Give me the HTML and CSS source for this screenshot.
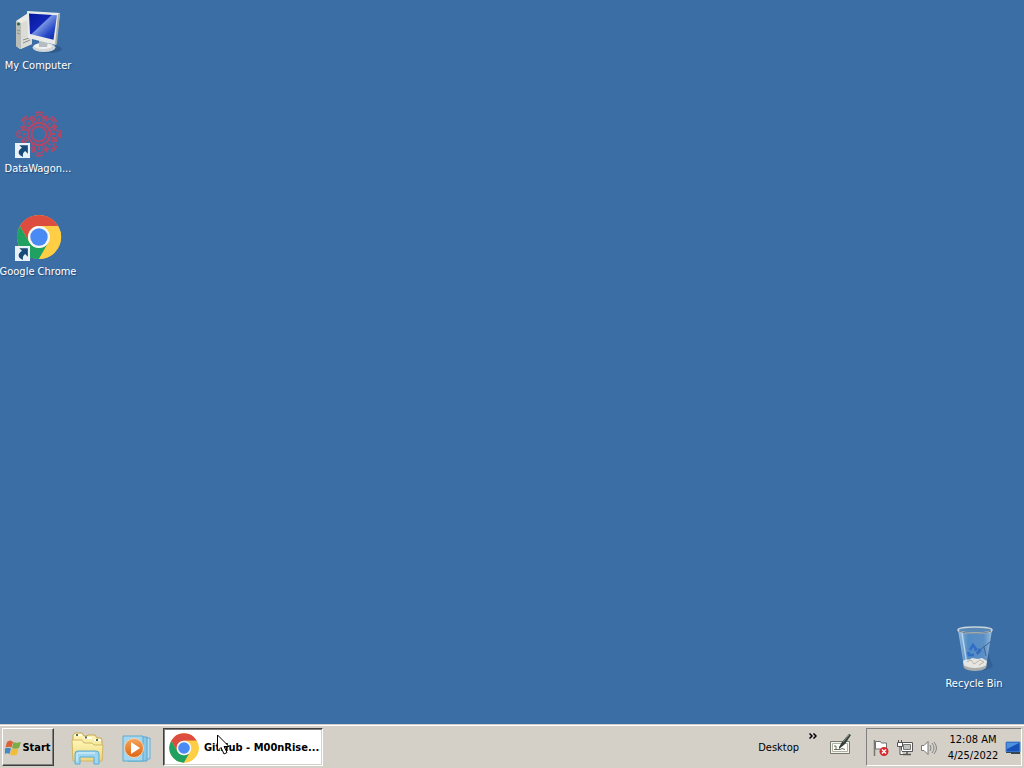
FILE: index.html
```html
<!DOCTYPE html>
<html lang="en">
<head>
<meta charset="utf-8">
<meta name="viewport" content="width=device-width, initial-scale=1">
<title>Desktop</title>
<link rel="stylesheet" href="styles.css">
</head>
<body>
<svg class="defs" width="0" height="0" aria-hidden="true">
  <defs>
    <symbol id="chrome" viewBox="0 0 48 48">
      <circle cx="24" cy="24" r="22" fill="#fc4"/>
      <path d="M4.9 13A22 22 0 0 1 43.1 13H24A11 11 0 0 0 14.5 29.5Z" fill="#dd4d3f"/>
      <path d="M4.9 13A22 22 0 0 0 24 46L33.5 29.5A11 11 0 0 1 14.5 29.5Z" fill="#1fa261"/>
      <path d="M43.1 13A22 22 0 0 1 24 46L33.5 29.5A11 11 0 0 0 24 13Z" fill="#fecf45"/>
      <circle cx="24" cy="24" r="11" fill="#f5f7fb"/>
      <circle cx="24" cy="24" r="8.7" fill="#4a8af4"/>
    </symbol>
    <symbol id="shortcut" viewBox="0 0 14 14">
      <path d="M0 0h14v14H0z" fill="#e9f1f8"/>
      <path d="M4 2h8v8L9.500 7.500C7.500 9 7 10.500 7.500 13C2.500 11 2 7.500 6.500 4.500Z" fill="#174a78"/>
    </symbol>
    <linearGradient id="screen" x1="0" y1="0" x2="1" y2="1">
      <stop offset="0" stop-color="#0716a0"/><stop offset=".42" stop-color="#1128b5"/><stop offset=".45" stop-color="#7793e2"/><stop offset=".72" stop-color="#2748c6"/><stop offset="1" stop-color="#0720a8"/>
    </linearGradient>
    <linearGradient id="folder" x1="0" y1="0" x2="0" y2="1">
      <stop offset="0" stop-color="#fff6b5"/><stop offset="1" stop-color="#ecd680"/>
    </linearGradient>
    <linearGradient id="glass" x1="0" x2="1">
      <stop offset="0" stop-color="#b6d5ee" stop-opacity=".75"/><stop offset=".3" stop-color="#5b98d2" stop-opacity=".7"/><stop offset=".75" stop-color="#6ea5d8" stop-opacity=".6"/><stop offset="1" stop-color="#b6d5ee" stop-opacity=".8"/>
    </linearGradient>
    <linearGradient id="orange" x1="0" y1="0" x2="0" y2="1">
      <stop offset="0" stop-color="#f5a45c"/><stop offset="1" stop-color="#de6412"/>
    </linearGradient>
    <g id="petal" fill="none" stroke="#b04868" stroke-width="1.800">
      <circle cx="24" cy="9" r="4.500" stroke-dasharray="3 1"/>
      <path d="M20 3l4-1 4 1M16 6l3 3M31 6l-3 3M19 15c2-3 8-3 10 0M24 8v3M20 18c2-2 6-2 8 0"/>
    </g>
  </defs>
</svg>

<main class="desktop">
  <nav class="shortcuts" aria-label="Desktop icons">
    <button class="item" type="button">
      <svg class="item-icon" viewBox="-1 0 48 48" aria-hidden="true">
        <path d="M1 13l12-8 4 2v29l-12 5-4-3z" fill="#ecebe4"/>
        <path d="M1 13l5 2v26l-5-3z" fill="#b9bcb7"/>
        <path d="M6 15l11-5v26L6 41z" fill="#dbdcd6"/>
        <circle cx="3.500" cy="16" r="1.500" fill="#1e6a43"/>
        <path d="M2 22l3 1m-3 2l3 1m3 6l6-2m-6 5l7-3" stroke="#8a8f8e"/>
        <ellipse cx="34" cy="41" rx="13" ry="4" fill="#244b77" opacity=".5"/>
        <ellipse cx="29" cy="39.500" rx="11.500" ry="4.500" fill="#d2d6d9"/>
        <ellipse cx="28" cy="38" rx="9" ry="3" fill="#f0f1ef"/>
        <path d="M24 31l9 3-1 5h-8z" fill="#b5bcc2"/>
        <path d="M12 3l33 2-4 32-28-7z" fill="#e9ebe9"/>
        <path d="M45 5l-3 31-2 1 3-31z" fill="#a9aba8"/>
        <path d="M14 5.500l28 1.800-3.500 24.500L15 26z" fill="url(#screen)"/>
      </svg>
      <span class="item-label">My Computer</span>
    </button>
    <button class="item" type="button">
      <svg class="item-icon" viewBox="-1 1 48 48" aria-hidden="true">
        <use href="#petal"/>
        <use href="#petal" transform="rotate(45 24 24)"/>
        <use href="#petal" transform="rotate(90 24 24)"/>
        <use href="#petal" transform="rotate(135 24 24)"/>
        <use href="#petal" transform="rotate(180 24 24)"/>
        <use href="#petal" transform="rotate(225 24 24)"/>
        <use href="#petal" transform="rotate(270 24 24)"/>
        <use href="#petal" transform="rotate(315 24 24)"/>
        <use href="#shortcut" x="0" y="33" width="15" height="15"/>
      </svg>
      <span class="item-label">DataWagon...</span>
    </button>
    <button class="item" type="button">
      <svg class="item-icon" viewBox="-1 1 48 48" aria-hidden="true">
        <use href="#chrome" width="48" height="48"/>
        <use href="#shortcut" x="0" y="33" width="15" height="15"/>
      </svg>
      <span class="item-label">Google Chrome</span>
    </button>
  </nav>
  <button class="item recycle" type="button">
    <svg class="item-icon" viewBox="-1 1 48 48" aria-hidden="true">
      <path d="M36 25l6 17-10 4z" fill="#244b77" opacity=".35"/>
      <path d="M7 5h34l-6 37c-4 4-18 4-22 0z" fill="url(#glass)"/>
      <path d="M12 36c3-3 6 0 9-3l6 1 4-1 5 3-1 6c-5 4-18 4-22 0z" fill="#e7e5df"/>
      <path d="M15 37l5-2 3 4 6-4 4 2-5 3" fill="none" stroke="#b9b5aa"/>
      <path d="M12.500 40c5 4 18 4 23 0l-.5 3c-4 4-18 4-22 0z" fill="#a9adac"/>
      <path d="M19 25l3-5 3 4-1 2m-1 4h-5l-1-3m9 2l3-3-2-2" fill="none" stroke="#2460c9" stroke-width="2.500" opacity=".7"/>
      <path d="M25 28L39 17M33 22l2 9" stroke="#3c6495"/>
      <path d="M11 8l5 32" stroke="#d8eaf8" stroke-width="1.500" opacity=".7"/>
      <ellipse cx="24" cy="5" rx="17" ry="3" fill="#5788b6" stroke="#cad4d9" stroke-width="1.500"/>
      <path d="M8 6c6 3 26 3 32 0" fill="none" stroke="#707c82"/>
    </svg>
    <span class="item-label">Recycle Bin</span>
  </button>
</main>

<footer class="taskbar">
  <button class="start" type="button">
    <svg class="flag" viewBox="0 0 16 16" aria-hidden="true">
      <path d="M2 2c2-2 4-2 6 0L6.500 7.500c-2-1-4-1-6 0z" fill="#dd6039"/>
      <path d="M8.500 2c2 1 4 1 7.500 0L14 8c-2 1-5 1-7 0z" fill="#7cac45"/>
      <path d="M0 8.500c2-1 4-1 6 0L4.500 14c-1.500-1-3-1-4.500 0z" fill="#438ac5"/>
      <path d="M6.500 8.500c2 1 5 1 7 0l-1.500 6c-2 1.500-5 1-7 0z" fill="#efbc3c"/>
    </svg>
    <span>Start</span>
  </button>
  <div class="quick">
    <button class="pin" type="button" aria-label="File Explorer">
      <svg class="pin-icon" viewBox="0 0 34 34" aria-hidden="true">
        <path d="M3 28V4l2-2h7l2 3h3l1-1h7l2 3h4l1 2v20z" fill="url(#folder)" stroke="#c6a854"/>
        <path d="M5 4h7M14 7h8M24 9h7" stroke="#fffdf0" stroke-width="2"/>
        <path d="M6 4h2M15 6.500h2M26 9h2" stroke="#566d51" stroke-width="2"/>
        <path d="M2 9h10l2 3h8l2 2h9l-1 16H3z" fill="url(#folder)" stroke="#d2b866"/>
        <path d="M5 33V23q0-3 3-3h18q3 0 3 3v10h-5v-7H10v7z" fill="#9ed5ef" stroke="#5caad2"/>
        <path d="M7 30v-7q0-1 2-1h16" fill="none" stroke="#e2f6fd"/>
      </svg>
    </button>
    <button class="pin" type="button" aria-label="Media Player">
      <svg class="pin-icon" viewBox="0 0 34 34" aria-hidden="true">
        <path d="M11 7h19v21H11z" fill="#b5def0" stroke="#67aed2"/>
        <path d="M8 6h19v24H8z" fill="#8dc9e7" stroke="#5aa3cc"/>
        <path d="M3 5h20v25H3z" fill="#a4d7ee" stroke="#5caad2"/>
        <circle cx="14" cy="17" r="9.500" fill="url(#orange)" stroke="#f6d4b1"/>
        <path d="M11 11l9 6-9 6z" fill="#fff"/>
      </svg>
    </button>
  </div>
  <button class="task" type="button">
    <svg class="task-icon" viewBox="0 0 48 48" aria-hidden="true"><use href="#chrome" width="48" height="48"/></svg>
    <span class="task-label">GitHub - M00nRise...</span>
  </button>
  <div class="toolbar">
    <span>Desktop</span>
    <button class="more" type="button" aria-label="Show more">
      <svg class="more-icon" viewBox="0 0 8 6" aria-hidden="true"><path d="M.500.500L3 3 .500 5.500M4.500.500L7 3 4.500 5.500" fill="none" stroke="#000" stroke-width="1.500"/></svg>
    </button>
  </div>
  <button class="pen" type="button" aria-label="Input panel">
    <svg class="pen-icon" viewBox="0 0 24 24" aria-hidden="true">
      <path d="M2.500 9.500h19v12h-19z" fill="#f5f4eb" stroke="#777970"/>
      <path d="M4.500 11.500h15v8h-15z" fill="#fffff8" stroke="#b0afa4"/>
      <path d="M6 14h2v3M6 17.500h6l2-1 3 1" fill="none" stroke="#666c64"/>
      <path d="M11 15l3-5 7-8 2 1-6 9-6 5z" fill="#343e3a"/>
      <path d="M15 10l6-7" stroke="#87938c"/>
    </svg>
  </button>
  <div class="tray">
    <button class="tray-button" type="button" aria-label="Action Center">
      <svg class="tray-icon" viewBox="0 0 16 16" aria-hidden="true">
        <path d="M1.500 0v16" stroke="#777" stroke-width="1.500"/>
        <path d="M2.500 1.500h5l1 1.500h5v7H8L7 9H2.500z" fill="#fff" stroke="#707070"/>
        <circle cx="11" cy="11.500" r="4.500" fill="#d52b32"/>
        <path d="M9 9.500l4 4m0-4l-4 4" stroke="#fff" stroke-width="1.500"/>
      </svg>
    </button>
    <button class="tray-button" type="button" aria-label="Network">
      <svg class="tray-icon" viewBox="0 0 16 16" aria-hidden="true">
        <path d="M4.500 2.500h11v9h-11z" fill="#fff" stroke="#565656"/>
        <path d="M6.500 4.500h7v5h-7z" fill="#c2c1bd" stroke="#777"/>
        <path d="M10 12v2M6 14.500h8" stroke="#555" stroke-width="1.500"/>
        <path d="M.500 2.500h5v4h-5zM1.500 2.500V0m3 2.500V0M3 7v7.500h3" fill="#fff" stroke="#555"/>
      </svg>
    </button>
    <button class="tray-button" type="button" aria-label="Volume">
      <svg class="tray-icon" viewBox="0 0 16 16" aria-hidden="true">
        <path d="M.500 5.500H3l4-4v13l-4-4H.500z" fill="#fff" stroke="#777"/>
        <path d="M9 5q2 3 0 6M11 3q4 5 0 10M13 2q5 6 0 12" fill="none" stroke="#858585"/>
      </svg>
    </button>
    <time class="clock" datetime="2022-04-25T00:08"><span>12:08 AM</span><span>4/25/2022</span></time>
    <button class="tray-button" type="button" aria-label="Show desktop">
      <svg class="tray-icon" viewBox="0 0 16 16" aria-hidden="true">
        <path d="M1 2h14v10H1z" fill="#1750b8" stroke="#568fcf"/>
        <path d="M2 3h12L2 9z" fill="#4d92de"/>
        <path d="M1 12h14v2H6v-1H1z" fill="#344651"/>
      </svg>
    </button>
  </div>
</footer>
<svg class="cursor" viewBox="0 0 13 21" aria-hidden="true"><path d="M.500 1v16l3.500-3.500 3 6.500 3-1.500-3-6h5z" fill="#fff" stroke="#000"/></svg>
</body>
</html>
```
FILE: styles.css
```css
* {
  box-sizing: border-box;
}

body {
  margin: 0;
  min-height: 100vh;
  display: flex;
  flex-direction: column;
  background: #3b6ea5;
  color: #000;
  font: 11px/16px "DejaVu Sans Condensed", "DejaVu Sans", Tahoma, sans-serif;
}

button {
  margin: 0;
  padding: 0;
  border: 0;
  background: none;
  color: inherit;
  font: inherit;
}

svg {
  display: block;
  flex: none;
}

.defs {
  position: absolute;
}

.desktop {
  position: relative;
  flex: 1;
  padding-top: 8px;
}

.shortcuts {
  display: flex;
  flex-direction: column;
  align-items: flex-start;
  gap: 37px;
}

.item {
  width: 76px;
  display: flex;
  flex-direction: column;
  align-items: center;
  gap: 2px;
  color: #fff;
}

.item-icon {
  width: 48px;
  height: 48px;
}

.item-label {
  white-space: nowrap;
  text-shadow: 1px 1px 1px #244b77;
}

.recycle {
  position: absolute;
  right: 12px;
  bottom: 32px;
}

.taskbar {
  min-height: 44px;
  padding: 3px 2px 2px;
  display: flex;
  align-items: stretch;
  background: #d4d0c8;
  border-top: 1px solid #d4d0c8;
  box-shadow: inset 0 1px #fff;
}

.start {
  width: 52px;
  padding-top: 1px;
  display: flex;
  align-items: center;
  justify-content: center;
  gap: 1px;
  border: 1px solid;
  border-color: #fff #404040 #404040 #fff;
  box-shadow: inset -1px -1px #808080;
  font-weight: bold;
}

.flag {
  width: 16px;
  height: 16px;
}

.quick {
  display: flex;
  align-items: center;
  gap: 16px;
  padding: 2px 9px 0 16px;
}

.pin-icon {
  width: 34px;
  height: 34px;
}

.task {
  width: 160px;
  padding: 2px 0 0 4px;
  display: flex;
  align-items: center;
  gap: 4px;
  background: #fff;
  border: 1px solid;
  border-color: #404040 #fff #fff #404040;
  box-shadow: inset 1px 1px #808080, inset -1px -1px #d4d0c8;
  font-weight: bold;
}

.task-icon {
  width: 32px;
  height: 32px;
}

.task-label {
  white-space: nowrap;
}

.toolbar {
  margin-left: auto;
  padding-top: 2px;
  display: flex;
  align-items: center;
  gap: 10px;
}

.more {
  align-self: flex-start;
  padding-top: 3px;
}

.more-icon {
  width: 8px;
  height: 6px;
}

.pen {
  margin: 0 14px 0 11px;
  padding-bottom: 6px;
}

.pen-icon {
  width: 24px;
  height: 24px;
}

.tray {
  padding: 2px 0 0 6px;
  display: flex;
  align-items: center;
  gap: 8px;
  border: 1px solid;
  border-color: #808080 #fff #fff #808080;
}

.tray-icon {
  width: 16px;
  height: 16px;
}

.clock {
  width: 56px;
  display: flex;
  flex-direction: column;
  align-items: center;
  white-space: nowrap;
}

.clock + .tray-button {
  margin-left: -4px;
}

.cursor {
  position: absolute;
  left: 217px;
  top: 734px;
  width: 13px;
  height: 21px;
}
```
